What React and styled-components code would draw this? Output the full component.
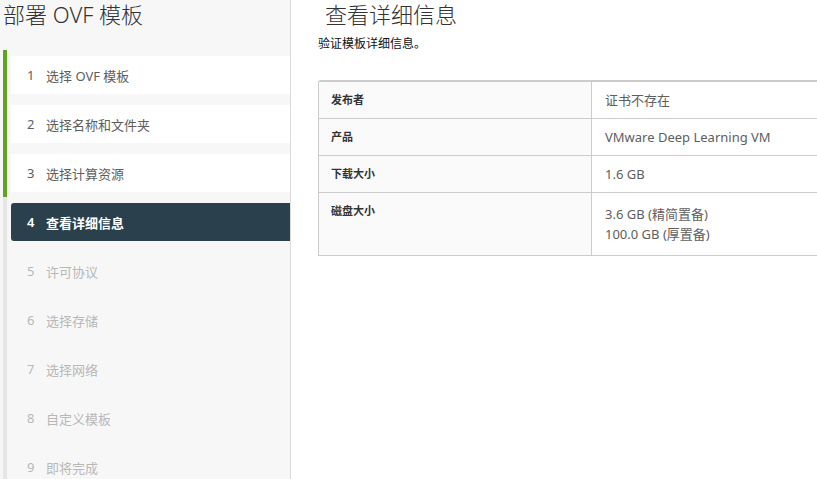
import React from 'react';
import styled, { createGlobalStyle } from 'styled-components';

const GlobalStyle = createGlobalStyle`
  html, body { margin: 0; padding: 0; background: #fff; }
  body { font-family: "Noto Sans", "Noto Sans CJK SC", sans-serif; }
`;

const steps = [
    { n: 1, name: '选择 OVF 模板', state: 'done' },
    { n: 2, name: '选择名称和文件夹', state: 'done' },
    { n: 3, name: '选择计算资源', state: 'done' },
    { n: 4, name: '查看详细信息', state: 'active' },
    { n: 5, name: '许可协议', state: 'todo' },
    { n: 6, name: '选择存储', state: 'todo' },
    { n: 7, name: '选择网络', state: 'todo' },
    { n: 8, name: '自定义模板', state: 'todo' },
    { n: 9, name: '即将完成', state: 'todo' },
];

const details = [
    { label: '发布者', values: ['证书不存在'] },
    { label: '产品', values: ['VMware Deep Learning VM'] },
    { label: '下载大小', values: ['1.6 GB'] },
    { label: '磁盘大小', values: ['3.6 GB (精简置备)', '100.0 GB (厚置备)'] },
];

function App() {
    return (
        <>
            <GlobalStyle />
            <Wizard>
                <Sidebar>
                    <WizardTitle>部署 OVF 模板</WizardTitle>
                    <StepList>
                        {steps.map(({ n, name, state }) => (
                            <StepSlot key={n} state={state}>
                                <StepBox state={state}>
                                    <StepNum>{n}</StepNum>
                                    {name}
                                </StepBox>
                            </StepSlot>
                        ))}
                    </StepList>
                </Sidebar>
                <Main>
                    <PageTitle>查看详细信息</PageTitle>
                    <Subtitle>验证模板详细信息。</Subtitle>
                    <DetailGrid>
                        {details.map(({ label, values }) => (
                            <React.Fragment key={label}>
                                <LabelCell>{label}</LabelCell>
                                <ValueCell multi={values.length > 1}>
                                    {values.map((v) => (
                                        <div key={v}>{v}</div>
                                    ))}
                                </ValueCell>
                            </React.Fragment>
                        ))}
                    </DetailGrid>
                </Main>
            </Wizard>
        </>
    );
}

const Wizard = styled.div`
  display: flex;
  height: 479px;
  overflow: hidden;
`;

const Sidebar = styled.nav`
  width: 290px;
  flex-shrink: 0;
  background: #f7f7f7;
  border-right: 1px solid #dcdcdc;
  display: flex;
  flex-direction: column;
`;

const WizardTitle = styled.h1`
  margin: 0;
  padding: 0 0 0 3px;
  height: 50px;
  flex-shrink: 0;
  line-height: 28px;
  font-size: 22px;
  font-weight: 300;
  color: #333;
`;

const StepList = styled.div`
  display: flex;
  flex-direction: column;
  flex-shrink: 0;
  margin-left: 3px;
`;

const StepSlot = styled.div`
  height: 49px;
  flex-shrink: 0;
  box-sizing: border-box;
  padding: 6px 0 5px 4px;
  border-left: 4px solid ${(p) => (p.state === 'done' ? '#62a420' : '#e6e6e6')};
`;

const StepBox = styled.div`
  height: 38px;
  display: flex;
  align-items: center;
  padding-left: 16px;
  font-size: 13px;
  border-radius: ${(p) => (p.state === 'active' ? '3px 0 0 3px' : '0')};
  background: ${(p) =>
        p.state === 'active' ? '#2a404c' : p.state === 'done' ? '#fff' : 'transparent'};
  color: ${(p) =>
        p.state === 'active' ? '#fff' : p.state === 'done' ? '#5e5e5e' : '#b8b8b8'};
  font-weight: ${(p) => (p.state === 'active' ? 600 : 400)};
`;

const StepNum = styled.span`
  display: inline-block;
  width: 19px;
`;

const Main = styled.main`
  flex: 1;
  padding-left: 27px;
  overflow: hidden;
`;

const PageTitle = styled.h2`
  margin: 0 0 0 7px;
  font-size: 22px;
  font-weight: 300;
  line-height: 28px;
  color: #333;
`;

const Subtitle = styled.p`
  margin: 7px 0 0;
  font-size: 12px;
  line-height: 18px;
  color: #111;
`;

const DetailGrid = styled.div`
  margin-top: 27px;
  width: 560px;
  display: grid;
  grid-template-columns: 273px 1fr;
  border: 1px solid #ccc;
  border-top: 2px solid #ccc;
  border-radius: 3px 0 0 0;
`;

const LabelCell = styled.div`
  background: #fafafa;
  padding: 9px 12px;
  line-height: 18px;
  font-size: 11px;
  font-weight: 700;
  color: #333;
  border-right: 1px solid #ccc;
  border-bottom: 1px solid #ccc;
  &:nth-last-child(2) { border-bottom: none; }
`;

const ValueCell = styled.div`
  background: #fff;
  padding: ${(p) => (p.multi ? '11px 13px' : '9px 13px')};
  line-height: ${(p) => (p.multi ? '20px' : '18px')};
  font-size: 13px;
  color: #5e5e5e;
  border-bottom: 1px solid #ccc;
  &:last-child { border-bottom: none; }
`;

export default App;
